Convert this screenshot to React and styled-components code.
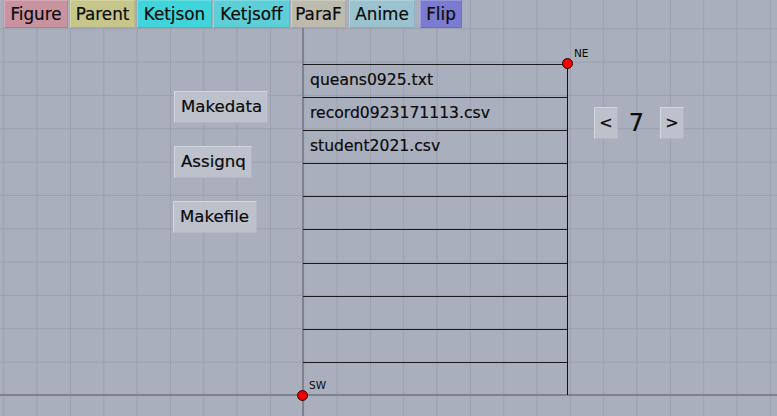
import React from "react";
import styled, { createGlobalStyle } from "styled-components";

const Global = createGlobalStyle`
  html, body { margin: 0; padding: 0; }
  body {
    font-family: "DejaVu Sans", "Liberation Sans", sans-serif;
    color: #0a0a0a;
    -webkit-text-stroke: 0.2px #0a0a0a;
  }
`;

const axis = "#7d828c";
const grid = "#9aa0ae";

const Canvas = styled.div`
  position: relative;
  width: 777px;
  height: 416px;
  overflow: hidden;
  background-color: #a9afbd;
  background-image:
    linear-gradient(to right, transparent 302px, ${axis} 302px, ${axis} 304px, transparent 304px),
    linear-gradient(to bottom, transparent 394px, ${axis} 394px, ${axis} 396px, transparent 396px),
    linear-gradient(to right, ${grid} 1px, transparent 1px),
    linear-gradient(to bottom, ${grid} 1px, transparent 1px);
  background-size: 100% 100%, 100% 100%, 33.333px 33.333px, 33.333px 33.333px;
  background-repeat: no-repeat, no-repeat, repeat, repeat;
  background-position: 0 0, 0 0, 3.3px 28.3px, 3.3px 28.3px;
`;

const Toolbar = styled.div`
  display: flex;
  gap: 2px;
  padding-left: 4px;
  height: 28px;
  align-items: flex-start;
`;

const ToolButton = styled.div`
  box-sizing: border-box;
  height: 28px;
  width: ${(p) => p.$w}px;
  margin-left: ${(p) => p.$ml || 0}px;
  background: ${(p) => p.$bg};
  border-left: 1px solid rgba(255, 255, 255, 0.25);
  border-top: 1px solid rgba(255, 255, 255, 0.2);
  border-bottom: 1px solid rgba(0, 0, 0, 0.12);
  border-right: 1px solid rgba(0, 0, 0, 0.08);
  font-size: 16.8px;
  line-height: 26px;
  text-align: center;
  white-space: nowrap;
`;

const Stage = styled.div`
  display: flex;
  align-items: flex-start;
  padding-left: 173px;
`;

const SideButtons = styled.div`
  display: flex;
  flex-direction: column;
  align-items: flex-start;
  gap: 23px;
  margin-top: 63px;
`;

const PanelButton = styled.div`
  box-sizing: border-box;
  height: 32px;
  width: ${(p) => p.$w}px;
  margin-left: ${(p) => p.$ml || 0}px;
  background: #bcc1cc;
  border-top: 1px solid #d2d6de;
  border-left: 1px solid #d2d6de;
  border-right: 1px solid #b2b7c2;
  border-bottom: 1px solid #b2b7c2;
  font-size: 16.6px;
  line-height: 30px;
  padding-left: 6px;
  white-space: nowrap;
`;

const Table = styled.div`
  position: relative;
  margin-left: 35px;
  margin-top: 36px;
  width: 265px;
  height: 331px;
  box-sizing: border-box;
  border-right: 1px solid #111;
  display: flex;
  flex-direction: column;
`;

const Row = styled.div`
  box-sizing: border-box;
  height: 33.1px;
  flex-shrink: 0;
  border-top: 1px solid #1a1a1a;
  padding-left: 7px;
  font-size: 15.6px;
  line-height: 30px;
  white-space: nowrap;
`;

const Point = styled.div`
  position: absolute;
  ${(p) => (p.$corner === "ne" ? "right: -6px; top: -6px;" : "left: -6px; bottom: -6px;")}
  width: 11px;
  height: 11px;
  box-sizing: border-box;
  border-radius: 50%;
  background: #ee0000;
  border: 1px solid #3a0000;
`;

const PointLabel = styled.span`
  position: absolute;
  left: 11px;
  bottom: 9px;
  font-size: 10.5px;
  -webkit-text-stroke: 0;
  white-space: nowrap;
`;

const Pager = styled.div`
  display: flex;
  align-items: center;
  margin-left: 26px;
  margin-top: 79px;
`;

const PageButton = styled.div`
  box-sizing: border-box;
  width: 24px;
  height: 32px;
  background: #bcc1cc;
  border-top: 1px solid #d2d6de;
  border-left: 1px solid #d2d6de;
  border-right: 1px solid #b2b7c2;
  border-bottom: 1px solid #b2b7c2;
  font-size: 16px;
  line-height: 30px;
  text-align: center;
`;

const PageNum = styled.div`
  width: 42px;
  padding-right: 5px;
  box-sizing: border-box;
  text-align: center;
  font-size: 24px;
  line-height: 32px;
`;

const tools = [
  { t: "Figure", w: 64, bg: "#c8929f" },
  { t: "Parent", w: 65, bg: "#c6c68a" },
  { t: "Ketjson", w: 75, bg: "#3fd5db" },
  { t: "Ketjsoff", w: 77, bg: "#5ccfd7", ml: -1 },
  { t: "ParaF", w: 55, bg: "#bdbbae", ml: -1 },
  { t: "Anime", w: 66, bg: "#9bc3cf", ml: 1 },
  { t: "Flip", w: 42, bg: "#7b7bd0", ml: 3 },
];

const files = [
  "queans0925.txt",
  "record0923171113.csv",
  "student2021.csv",
  "", "", "", "", "", "", "",
];

export default function App() {
  return (
    <>
      <Global />
      <Canvas>
        <Toolbar>
          {tools.map((b) => (
            <ToolButton key={b.t} $w={b.w} $bg={b.bg} $ml={b.ml}>
              {b.t}
            </ToolButton>
          ))}
        </Toolbar>
        <Stage>
          <SideButtons>
            <PanelButton $w={94} $ml={1}>Makedata</PanelButton>
            <PanelButton $w={78} $ml={1}>Assignq</PanelButton>
            <PanelButton $w={84}>Makefile</PanelButton>
          </SideButtons>
          <Table>
            {files.map((f, i) => (
              <Row key={i}>{f}</Row>
            ))}
            <Point $corner="ne">
              <PointLabel>NE</PointLabel>
            </Point>
            <Point $corner="sw">
              <PointLabel>SW</PointLabel>
            </Point>
          </Table>
          <Pager>
            <PageButton>&lt;</PageButton>
            <PageNum>7</PageNum>
            <PageButton>&gt;</PageButton>
          </Pager>
        </Stage>
      </Canvas>
    </>
  );
}
